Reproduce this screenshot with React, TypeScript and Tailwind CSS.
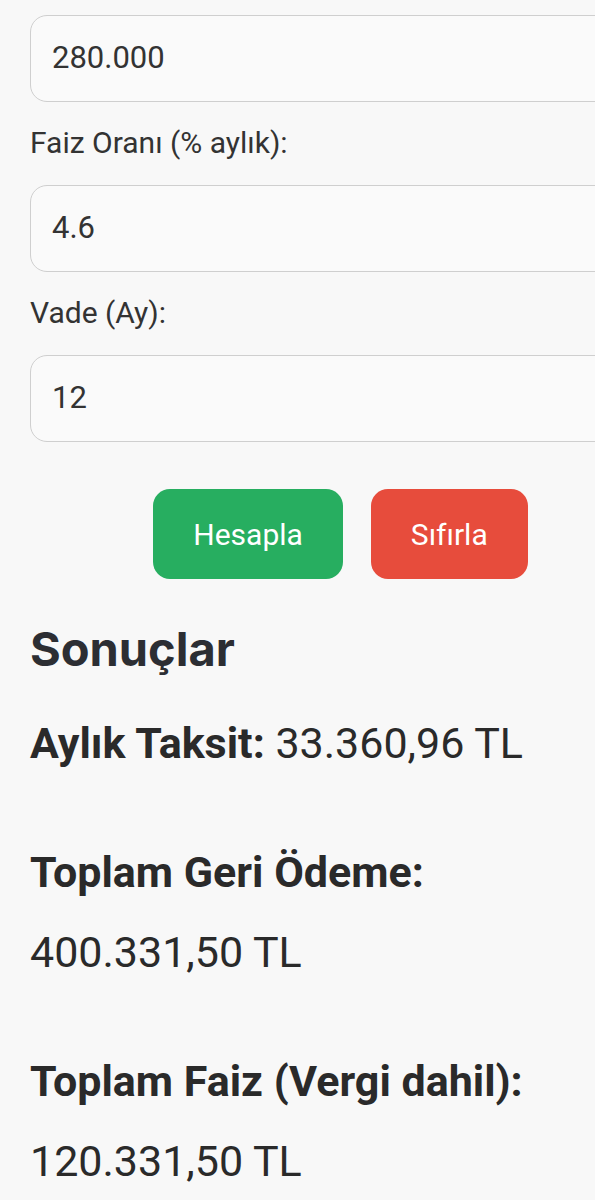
import React from "react";

const roboto = { fontFamily: "Roboto, 'Liberation Sans', sans-serif" };

function Field({ label, value }: { label?: string; value: string }) {
  return (
    <div className="flex flex-col">
      {label && (
        <label className="text-[30px] leading-[45px] text-[#333333] mt-[18px] mb-[20px]">{label}</label>
      )}
      <div className="h-[87px] w-full rounded-[17px] border border-[#cfcfcf] bg-[#fafafa] pl-[21px] flex items-center text-[31px] text-[#333333]">
        {value}
      </div>
    </div>
  );
}

export default function App() {
  return (
    <div className="w-[595px] h-[1200px] overflow-hidden bg-[#f8f8f8]" style={roboto}>
      <div className="w-[621px] ml-[30px] pt-[15px]">
        <Field value="280.000" />
        <Field label="Faiz Oranı (% aylık):" value="4.6" />
        <Field label="Vade (Ay):" value="12" />
        <div className="flex justify-center gap-[28px] mt-[47px]">
          <button className="h-[90px] px-[40px] rounded-[17px] bg-[#27ae60] text-[30px] text-white">Hesapla</button>
          <button className="h-[90px] px-[40px] rounded-[17px] bg-[#e74c3c] text-[30px] text-white">Sıfırla</button>
        </div>
        <h2
          className="mt-[40px] text-[47px] leading-[60px] font-bold text-[#2c2e33]"
          style={{ fontFamily: "Inter, 'Open Sans', sans-serif" }}
        >
          Sonuçlar
        </h2>
        <div className="text-[43px] leading-[80px] text-[#2a2a2a] mt-[24px]">
          <p>
            <strong className="font-bold">Aylık Taksit:</strong>{" "}
            <span className="whitespace-nowrap">33.360,96 TL</span>
          </p>
          <p className="mt-[49px]">
            <strong className="font-bold">Toplam Geri Ödeme:</strong>{" "}
            <span className="whitespace-nowrap">400.331,50 TL</span>
          </p>
          <p className="mt-[49px]">
            <strong className="font-bold">Toplam Faiz (Vergi dahil):</strong>{" "}
            <span className="whitespace-nowrap">120.331,50 TL</span>
          </p>
        </div>
      </div>
    </div>
  );
}
